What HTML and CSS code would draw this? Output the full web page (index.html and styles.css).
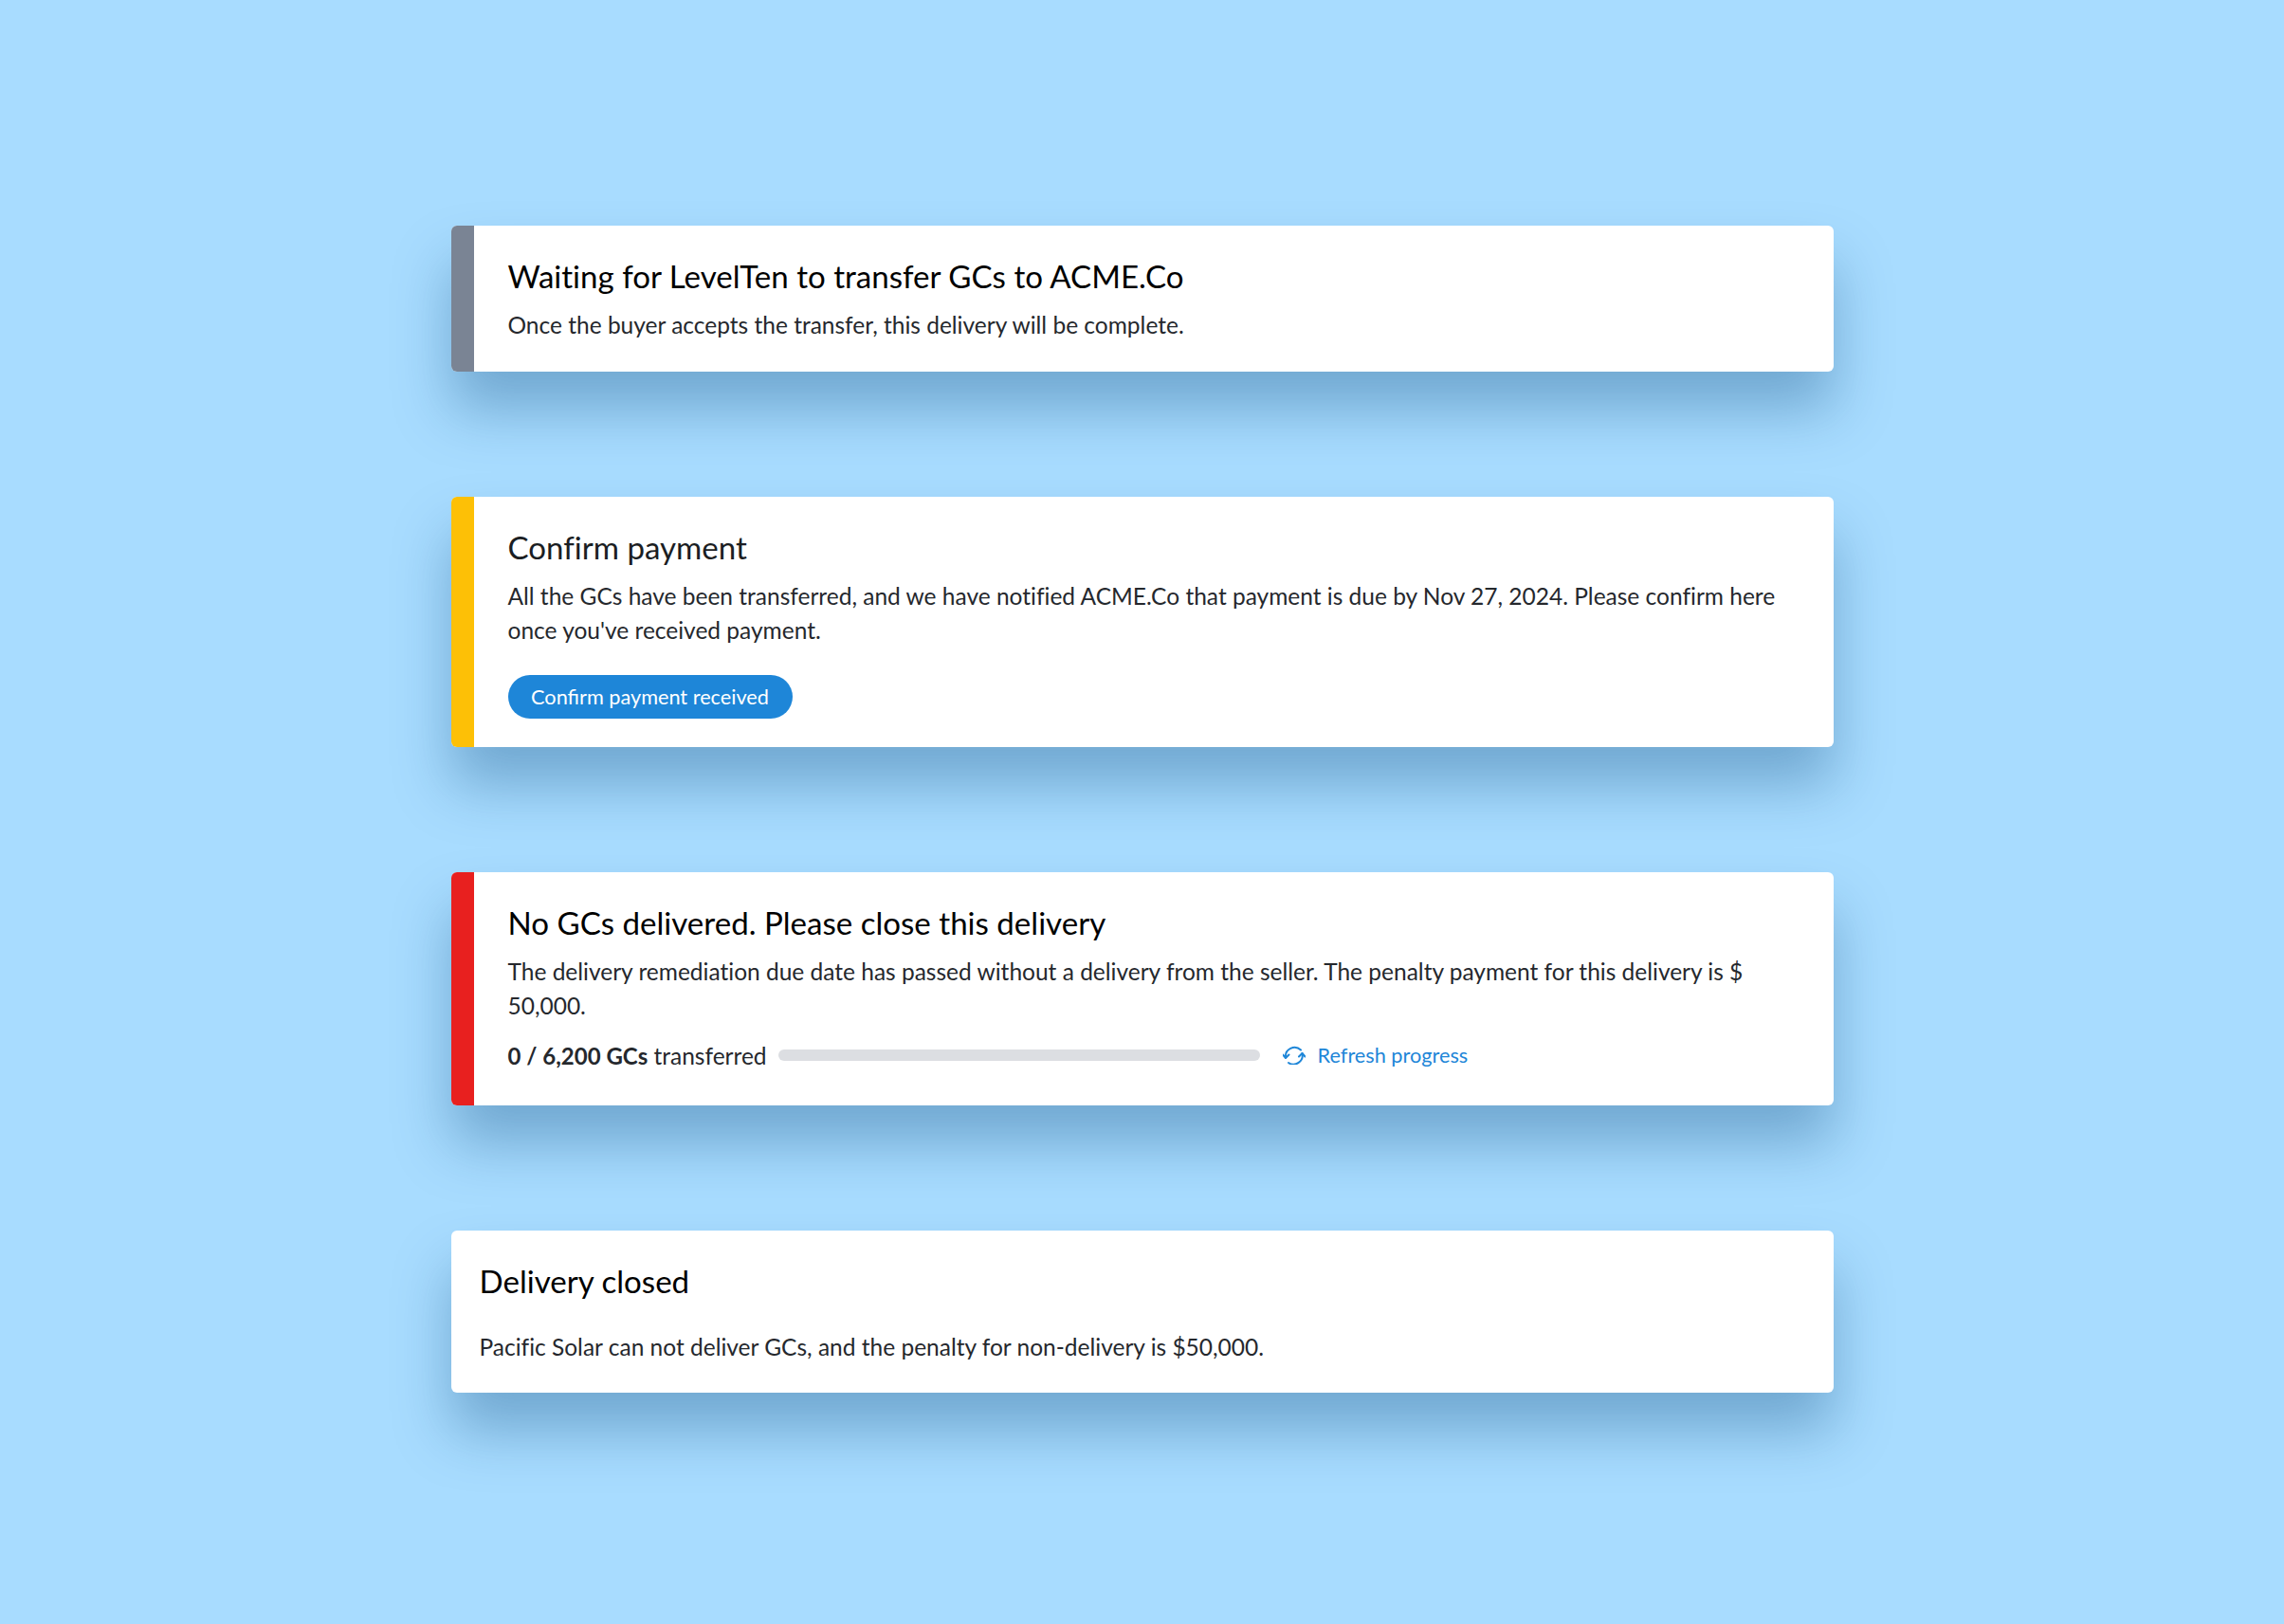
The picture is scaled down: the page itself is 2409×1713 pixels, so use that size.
FILE: index.html
```html
<!DOCTYPE html>
<html lang="en">
<head>
    <meta charset="UTF-8">
    <meta name="viewport" content="width=device-width, initial-scale=1.0">
    <title>Delivery status banners</title>
    <link rel="stylesheet" href="styles.css">
</head>
<body>
    <div class="banner-list">
        <div class="banner banner-waiting">
            <div class="banner-stripe"></div>
            <div class="banner-body">
                <h2 class="banner-title">Waiting for LevelTen to transfer GCs to ACME.Co</h2>
                <p class="banner-text">Once the buyer accepts the transfer, this delivery will be complete.</p>
            </div>
        </div>

        <div class="banner banner-action">
            <div class="banner-stripe"></div>
            <div class="banner-body">
                <h2 class="banner-title">Confirm payment</h2>
                <p class="banner-text">All the GCs have been transferred, and we have notified ACME.Co that payment is due by Nov 27, 2024. Please confirm here once you've received payment.</p>
                <button class="confirm-btn">Confirm payment received</button>
            </div>
        </div>

        <div class="banner banner-error">
            <div class="banner-stripe"></div>
            <div class="banner-body">
                <h2 class="banner-title">No GCs delivered. Please close this delivery</h2>
                <p class="banner-text">The delivery remediation due date has passed without a delivery from the seller. The penalty payment for this delivery is $ 50,000.</p>
                <div class="progress-row">
                    <span class="progress-label"><strong>0 / 6,200 GCs</strong> transferred</span>
                    <div class="progress-track"></div>
                    <a class="refresh-link" href="#">
                        <svg class="refresh-icon" viewBox="8 8 24 20" fill="none" stroke="currentColor" stroke-width="2" stroke-linecap="round" stroke-linejoin="round">
                            <path d="M11 20.5A9.5 9.5 0 0 1 27 12.5"/>
                            <path d="M28.5 16A9.5 9.5 0 0 1 14 26"/>
                            <path d="M8 17.5L11 21L14.5 17.5"/>
                            <path d="M25 19.5L28.5 16L31.5 19.5"/>
                        </svg>
                        Refresh progress
                    </a>
                </div>
            </div>
        </div>

        <div class="banner banner-closed">
            <div class="banner-body">
                <h2 class="banner-title">Delivery closed</h2>
                <p class="banner-text">Pacific Solar can not deliver GCs, and the penalty for non-delivery is $50,000.</p>
            </div>
        </div>
    </div>
</body>
</html>
```

FILE: styles.css
```css
body {
    font-family: 'Lato', 'Open Sans', sans-serif;
    font-variant-ligatures: none;
    background-color: #a8dcff;
    color: #25282d;
    margin: 0;
    padding: 0;
    min-height: 1713px;
}

.banner-list {
    width: 1458px;
    margin: 0 auto;
    padding-top: 238px;
    display: flex;
    flex-direction: column;
    gap: 132px;
}

.banner {
    display: flex;
    background-color: #fff;
    border-radius: 6px;
    overflow: hidden;
    box-shadow: 0 40px 60px rgba(23, 83, 134, 0.38);
}

.banner-stripe {
    width: 24px;
    flex-shrink: 0;
}

.banner-waiting .banner-stripe {
    background-color: #7a8494;
}

.banner-action .banner-stripe {
    background-color: #fdc006;
}

.banner-error .banner-stripe {
    background-color: #e8201f;
}

.banner-body {
    flex: 1;
    padding: 34px 36px 31px;
}

.banner-title {
    font-size: 33.1px;
    line-height: 38px;
    font-weight: 400;
    color: #000;
    margin: 0 0 15px;
}

.banner-action .banner-title {
    color: #1b1e23;
}

.banner-text {
    font-size: 24.5px;
    line-height: 36px;
    margin: 0;
}

.confirm-btn {
    display: block;
    width: 300px;
    height: 46px;
    margin-top: 29px;
    padding: 0;
    background-color: #1e86d8;
    border: none;
    border-radius: 23px;
    color: #fff;
    font-family: inherit;
    font-size: 21.7px;
}

.banner-action .banner-body {
    padding-bottom: 30px;
}

.banner-error .banner-body {
    padding-bottom: 35px;
}

.progress-row {
    display: flex;
    align-items: center;
    margin-top: 16px;
    height: 36px;
}

.progress-label {
    font-size: 24.5px;
    white-space: nowrap;
}

.progress-label strong {
    font-size: 24px;
}

.progress-track {
    width: 508px;
    height: 12px;
    margin-left: 12px;
    background-color: #dcdee2;
    border-radius: 6px;
}

.refresh-link {
    display: flex;
    align-items: center;
    margin-left: 24px;
    color: #1e86d8;
    font-size: 21.7px;
    text-decoration: none;
}

.refresh-icon {
    width: 24px;
    height: 20px;
    margin-right: 13px;
}

.banner-closed .banner-body {
    padding: 34px 30px 30px;
}

.banner-closed .banner-title {
    margin-bottom: 33px;
}
```
